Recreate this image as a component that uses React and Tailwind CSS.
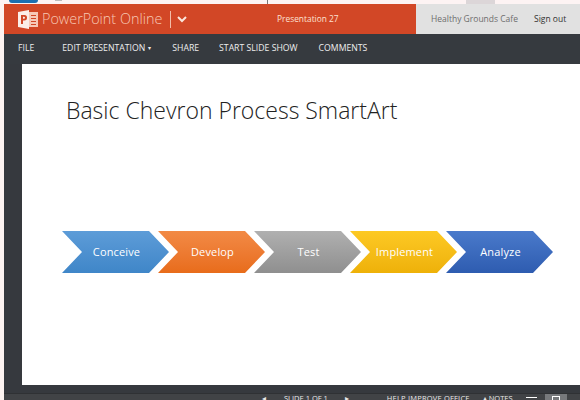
const chevrons = [
  { label: "Conceive", cls: "bg-gradient-to-b from-[#5d9cd8] to-[#3f86c8]", first: true },
  { label: "Develop", cls: "bg-gradient-to-b from-[#f28a45] to-[#e86c1a]" },
  { label: "Test", cls: "bg-gradient-to-b from-[#b0b0b0] to-[#8f8f8f]" },
  { label: "Implement", cls: "bg-gradient-to-b from-[#fdc923] to-[#eeb108]" },
  { label: "Analyze", cls: "bg-gradient-to-b from-[#4a7acb] to-[#2e5cb0]" },
];

function Chevron({ label, cls, first }) {
  return (
    <div className={`${first ? "" : "-ml-[11px]"} w-[107px] h-[42px] pl-[2px] flex items-center justify-center text-white text-[11px] tracking-[0.15px] [clip-path:polygon(0_0,87px_0,107px_50%,87px_100%,0_100%,20px_50%)] ${cls}`}>
      {label}
    </div>
  );
}

export default function App() {
  return (
    <div className="w-[580px] h-[400px] overflow-hidden bg-[#fdf3f1] flex flex-col font-['Open_Sans','Liberation_Sans',sans-serif] relative">
      <div className="h-[4px] shrink-0 flex bg-[#fdf3f3]">
        <div className="ml-[9px] w-[29px] h-[3px] rounded-b-[4px] bg-[#1c6fb0]" />
        <div className="ml-[17px] w-[7px] h-[1px] bg-[#bbbbbb]" />
        <div className="ml-[205px] w-[1px] h-[4px] bg-[#777777]" />
        <div className="ml-[198px] w-[29px] h-[4px] bg-[#dcd6d8]" />
      </div>
      <div className="flex-1 flex flex-col ml-[4px]">
        <div className="h-[30px] shrink-0 flex">
          <div className="w-[412px] bg-[#d24726] flex items-center relative">
            <svg width="20" height="19" viewBox="0 0 20 19" className="ml-[14px]">
              <rect x="8" y="2" width="12" height="15" fill="#f6c9b8" />
              <rect x="13" y="5" width="5" height="1" fill="#d24726" />
              <rect x="13" y="8" width="5" height="1" fill="#d24726" />
              <rect x="13" y="11" width="5" height="1" fill="#d24726" />
              <rect x="13" y="14" width="5" height="1" fill="#d24726" />
              <path d="M0 2 L11 0 V19 L0 17 Z" fill="#fbeee8" />
              <path d="M3 14 V5 H6.5 Q9 5 9 7.7 Q9 10.4 6.5 10.4 H5 V14 Z M5 6.7 V8.8 H6 Q7 8.8 7 7.7 Q7 6.7 6 6.7 Z" fill="#d24726" />
            </svg>
            <span className="ml-[4px] text-[#f7c7b4] text-[14.4px] font-light leading-none">PowerPoint Online</span>
            <div className="ml-[8px] w-[1px] h-[17px] bg-[#f2bda9]" />
            <svg width="10" height="7" viewBox="0 0 10 7" className="ml-[6px]" fill="none" stroke="#fbe6dc" strokeWidth="2">
              <path d="M1 1 L5 5 L9 1" />
            </svg>
            <span className="absolute left-[273px] text-[#fde0d2] text-[8.4px] leading-none">Presentation 27</span>
          </div>
          <div className="flex-1 bg-[#e1e1e1] flex items-center text-[8.5px]">
            <span className="ml-[15px] text-[#6e6e6e]">Healthy Grounds Cafe</span>
            <span className="ml-[16px] text-[#333333]">Sign out</span>
          </div>
        </div>
        <div className="h-[30px] shrink-0 bg-[#363a3f] flex items-center text-[#eeeeee] text-[8.7px] pb-[1px]">
          <span className="ml-[14px]">FILE</span>
          <span className="ml-[28px]">EDIT PRESENTATION</span>
          <span className="ml-[3px] text-[6px]">▾</span>
          <span className="ml-[21px]">SHARE</span>
          <span className="ml-[20px]">START SLIDE SHOW</span>
          <span className="ml-[21px]">COMMENTS</span>
        </div>
        <div className="flex-1 bg-[#36393e] flex flex-col">
          <div className="ml-[18px] h-[321px] bg-white flex flex-col">
            <h1 className="ml-[44px] mt-[30px] text-[23px] leading-[32px] text-[#222222] font-light">Basic Chevron Process SmartArt</h1>
            <div className="ml-[40px] mt-[105px] flex">
              {chevrons.map((c) => <Chevron key={c.label} {...c} />)}
            </div>
          </div>
          <div className="h-[8px] shrink-0" />
          <div className="flex-1 bg-[#414346] border-t border-[#2f3134] flex items-end text-[#e8e8e8] text-[7.5px] leading-[5px] overflow-hidden">
            <span className="ml-[258px]">◂</span>
            <span className="ml-[18px]">SLIDE 1 OF 1</span>
            <span className="ml-[17px]">▸</span>
            <span className="ml-[38px] tracking-[0.2px]">HELP IMPROVE OFFICE</span>
            <span className="ml-[13px]">▴ NOTES</span>
            <div className="ml-[13px] w-[11px] h-[4px] border-t border-white" />
            <div className="ml-[8px] w-[22px] h-[7px] bg-[#77797c] flex justify-center"><div className="w-[8px] h-[4px] border border-white border-b-0 mt-[2px]" /></div>
          </div>
        </div>
      </div>
    </div>
  );
}
